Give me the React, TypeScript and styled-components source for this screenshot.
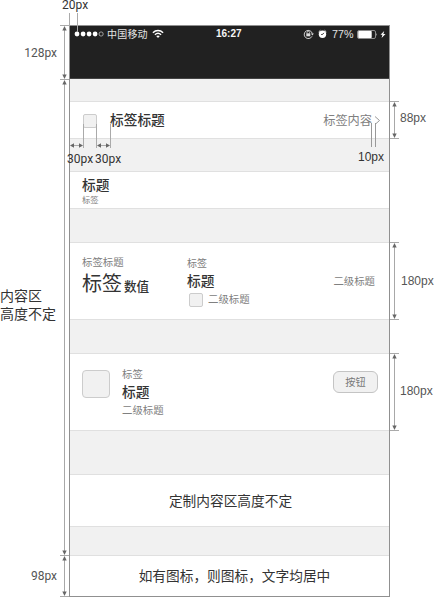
import React from 'react';
import styled, { createGlobalStyle } from 'styled-components';

const GlobalStyle = createGlobalStyle`
  * { box-sizing: border-box; }
  body { margin: 0; background: #fff; font-family: "Noto Sans CJK SC", sans-serif; color: #333; }
`;

const Page = styled.main`
  display: grid;
  grid-template-columns: 69px 321px 44px;
  width: 434px;
  height: 597px;
  padding-top: 25px;
  position: relative;
  overflow: hidden;
  background: #fff;
`;

const Phone = styled.section`
  display: flex;
  flex-direction: column;
  height: 572px;
  border: 1px solid #909090;
  background: #f1f1f1;
`;

const Header = styled.header`
  height: 53px;
  background: #212121;
  border-bottom: 1px solid #444;
`;

const StatusBar = styled.div`
  display: flex;
  align-items: center;
  height: 16px;
  padding-left: 4px;
  color: #e4e4e4;
`;

const Carrier = styled.span`
  width: 45px;
  margin-left: 3px;
  font-size: 10px;
  line-height: 14px;
  letter-spacing: 0.2px;
  white-space: nowrap;
`;

const Clock = styled.span`
  width: 27px;
  margin-left: 52px;
  font: bold 10px/14px "Liberation Sans", sans-serif;
  color: #f5f5f5;
`;

const Percent = styled.span`
  width: 25px;
  margin-left: 4px;
  font: 10.7px/14px "Liberation Sans", sans-serif;
`;

const Icon = styled.svg<{ $gap?: number }>`
  display: block;
  flex: none;
  margin-left: ${(p) => p.$gap ?? 0}px;
`;

const Row = styled.div<{ $top: number; $height: number; $center?: boolean }>`
  display: flex;
  flex: none;
  align-items: ${(p) => (p.$center ? 'center' : 'flex-start')};
  justify-content: ${(p) => (p.$center ? 'center' : 'flex-start')};
  height: ${(p) => p.$height}px;
  margin-top: ${(p) => p.$top}px;
  background: #fff;
  border-top: 1px solid #e0e0e0;
  border-bottom: 1px solid #e0e0e0;
`;

const CenterRow = styled(Row)`
  padding: 0 0 2px 2px;
`;

const FooterRow = styled(Row)`
  padding: 0 0 2px 10px;
  border-bottom: 0;
`;

const Column = styled.div<{ $left?: number; $top?: number; $width?: number }>`
  display: flex;
  flex: none;
  flex-direction: column;
  width: ${(p) => (p.$width ? `${p.$width}px` : 'auto')};
  margin-left: ${(p) => p.$left ?? 0}px;
  padding-top: ${(p) => p.$top ?? 0}px;
`;

const Title = styled.span<{ $size?: number; $line?: number }>`
  font-size: ${(p) => p.$size ?? 13.7}px;
  line-height: ${(p) => p.$line ?? 18}px;
  font-weight: 500;
  color: #333;
  white-space: nowrap;
`;

const BodyText = styled(Title)`
  font-weight: 400;
`;

const Caption = styled.span<{ $size?: number; $line?: number }>`
  font-size: ${(p) => p.$size ?? 10.4}px;
  line-height: ${(p) => p.$line ?? 14}px;
  color: #808080;
  white-space: nowrap;
`;

const Value = styled.div`
  display: flex;
  align-items: baseline;
  gap: 2px;
`;

const Inline = styled.div`
  display: flex;
  align-items: center;
  gap: 5px;
`;

const Thumb = styled.span<{ $size: number; $radius: number }>`
  flex: none;
  width: ${(p) => p.$size}px;
  height: ${(p) => p.$size}px;
  border: 1px solid #ccc;
  border-radius: ${(p) => p.$radius}px;
  background: #f1f1f1;
`;

const ThumbSlot = styled.div<{ $left: number; $top: number }>`
  display: flex;
  margin: ${(p) => p.$top}px 0 0 ${(p) => p.$left}px;
`;

const Trailing = styled.div<{ $top: number; $right: number }>`
  display: flex;
  align-items: center;
  margin: ${(p) => p.$top}px ${(p) => p.$right}px 0 auto;
`;

const Button = styled.button`
  width: 45px;
  height: 22px;
  padding: 0 0 1px;
  border: 1px solid #c4c4c4;
  border-radius: 6px;
  background: #f1f1f1;
  color: #777;
  font: 10.2px/18px "Noto Sans CJK SC", sans-serif;
`;

const Gutter = styled.aside`
  display: flex;
  flex-direction: column;
`;

const Measure = styled.div<{ $top?: number; $height: number; $side: 'left' | 'right' }>`
  display: flex;
  flex: none;
  align-items: center;
  justify-content: ${(p) => (p.$side === 'left' ? 'flex-end' : 'flex-start')};
  height: ${(p) => p.$height}px;
  margin-top: ${(p) => p.$top ?? 0}px;
`;

const Dim = styled.span<{ $font?: string; $pad?: string; $line?: number }>`
  padding: ${(p) => p.$pad ?? '0'};
  font: 12px/${(p) => p.$line ?? 16}px ${(p) => p.$font ?? '"Liberation Sans"'}, sans-serif;
  color: #555;
  white-space: nowrap;
`;

const AreaNote = styled.div`
  width: 60px;
  padding-bottom: 27px;
  font-size: 14px;
  line-height: 18px;
  white-space: nowrap;
`;

const Overlay = styled.div<{ $x: number; $y: number }>`
  position: absolute;
  left: ${(p) => p.$x}px;
  top: ${(p) => p.$y}px;
`;

const DimDark = styled(Dim)`
  display: block;
  color: #333;
`;

function VerticalRuler({ height }: { height: number }) {
  return (
    <Icon width="9" height={height} fill="none">
      <path d={`M0 .5H9M0 ${height - 0.5}H9`} stroke="#aaa" />
      <path d={`M4.5 2V${height - 2}`} stroke="#a8a8a8" />
      <path
        d={`M4.5 1L6.7 5.5H2.3ZM4.5 ${height - 1}L6.7 ${height - 5.5}H2.3Z`}
        fill="#666"
      />
    </Icon>
  );
}

function StatusIcons() {
  return (
    <>
      <Icon $gap={60} width="12" height="12" viewBox="0 0 12 12" fill="none" stroke="#ddd">
        <path d="M9 8.3A4.1 4.1 0 1 1 9.3 5.5" strokeWidth=".9" />
        <path d="M7.9 5.5h3L9.4 7.5Z" fill="#ddd" stroke="none" />
        <path d="M4 5.4V4.5a1.3 1.3 0 0 1 2.6 0v.9" strokeWidth=".8" />
        <path d="M3.3 5.3h4v3h-4Z" fill="#ddd" stroke="none" />
      </Icon>
      <Icon $gap={2} width="11" height="12" viewBox="0 0 11 12">
        <circle cx="5.5" cy="6.3" r="3.7" fill="#fff" />
        <path d="M1.6 4 3.4 2.3M9.4 4 7.6 2.3" stroke="#eee" strokeWidth="1" />
        <path d="M5.5 6.5 6.8 4.9M5.5 6.5H4.2" stroke="#333" strokeWidth="1" />
      </Icon>
    </>
  );
}

export default function App() {
  return (
    <>
      <GlobalStyle />
      <Page>
        <Gutter>
          <Measure $height={55} $side="left">
            <Dim $font="Roboto" $pad="0 3px 0 0">128px</Dim>
            <VerticalRuler height={55} />
          </Measure>
          <Measure $height={477} $top={-1} $side="left">
            <AreaNote>
              内容区
              <br />
              高度不定
            </AreaNote>
            <VerticalRuler height={477} />
          </Measure>
          <Measure $height={42} $top={-1} $side="left">
            <Dim $font="Roboto" $pad="0 3px 0 0">98px</Dim>
            <VerticalRuler height={42} />
          </Measure>
        </Gutter>

        <Phone>
          <Header>
            <StatusBar>
              <Icon width="30" height="8" viewBox="0 0 30 8" fill="#fff">
                <circle cx="3" cy="4" r="2.4" />
                <circle cx="9.1" cy="4" r="2.4" />
                <circle cx="15.1" cy="4" r="2.4" />
                <circle cx="21.1" cy="4" r="2.4" />
                <circle cx="27.1" cy="4" r="2.1" fill="none" stroke="#bbb" strokeWidth=".8" />
              </Icon>
              <Carrier>中国移动</Carrier>
              <Icon width="12" height="10" viewBox="0 0 12 10" fill="none" stroke="#fff" strokeWidth="1.4">
                <path d="M.9 3.7C3.8.8 8.2.8 11.1 3.7M2.9 5.8c1.8-1.7 4.4-1.7 6.2 0" />
                <path d="M4.2 7.1q1.8-1.4 3.6 0L6 9Z" fill="#fff" stroke="none" />
              </Icon>
              <Clock>16:27</Clock>
              <StatusIcons />
              <Percent>77%</Percent>
              <Icon width="21" height="9" viewBox="0 0 21 9">
                <rect x=".5" y=".5" width="18" height="8" rx="1.5" fill="none" stroke="#aaa" strokeWidth=".8" />
                <rect x="1.2" y="1.1" width="13.5" height="6.8" rx=".6" fill="#fff" />
                <path d="M19.4 3q1.3 1.5 0 3Z" fill="#ccc" />
              </Icon>
              <Icon $gap={2} width="6" height="9" viewBox="0 0 6 9">
                <path d="M4.2 1 .5 4.8h1.9L1.6 8l3.9-4H3.4Z" fill="#fff" />
              </Icon>
            </StatusBar>
          </Header>

          <Row $top={22} $height={38}>
            <ThumbSlot $left={13} $top={12}>
              <Thumb $size={14} $radius={2} />
            </ThumbSlot>
            <Column $left={13} $top={8}>
              <Title>标签标题</Title>
            </Column>
            <Trailing $top={10} $right={8}>
              <Caption $size={12.2} $line={16}>标签内容</Caption>
              <Icon $gap={2} width="7" height="9" viewBox="0 0 7 9" fill="none" stroke="#999">
                <path d="M1 .5 5.5 4.5 1 8.5" />
              </Icon>
            </Trailing>
          </Row>

          <Row $top={32} $height={38}>
            <Column $left={12} $top={3}>
              <Title>标题</Title>
              <Caption $size={8.3} $line={12}>标签</Caption>
            </Column>
          </Row>

          <Row $top={33} $height={78}>
            <Column $left={12} $top={12} $width={105}>
              <Caption>标签标题</Caption>
              <Value>
                <BodyText $size={20} $line={28}>标签</BodyText>
                <Title $size={12.6}>数值</Title>
              </Value>
            </Column>
            <Column $top={13}>
              <Caption $size={10}>标签</Caption>
              <Title $line={20}>标题</Title>
              <ThumbLine />
            </Column>
            <Trailing $top={31} $right={14}>
              <Caption>二级标题</Caption>
            </Trailing>
          </Row>

          <Row $top={33} $height={78}>
            <ThumbSlot $left={12} $top={16}>
              <Thumb $size={28} $radius={4} />
            </ThumbSlot>
            <Column $left={12} $top={13}>
              <Caption>标签</Caption>
              <Title $line={21}>标题</Title>
              <Caption $line={16}>二级标题</Caption>
            </Column>
            <Trailing $top={17} $right={11}>
              <Button>按钮</Button>
            </Trailing>
          </Row>

          <CenterRow $top={43} $height={53} $center>
            <BodyText>定制内容区高度不定</BodyText>
          </CenterRow>

          <FooterRow $top={28} $height={41} $center>
            <BodyText>如有图标，则图标，文字均居中</BodyText>
          </FooterRow>
        </Phone>

        <Gutter>
          <Measure $top={76} $height={38} $side="right">
            <VerticalRuler height={38} />
            <Dim $pad="0 0 4px 1px">88px</Dim>
          </Measure>
          <Measure $top={103} $height={78} $side="right">
            <VerticalRuler height={78} />
            <Dim $pad="0 0 0 2px">180px</Dim>
          </Measure>
          <Measure $top={33} $height={78} $side="right">
            <VerticalRuler height={78} />
            <Dim $pad="0 0 2px 1px">180px</Dim>
          </Measure>
        </Gutter>

        <Overlay $x={62} $y={0}>
          <DimDark $font="Roboto" $line={10}>20px</DimDark>
        </Overlay>
        <Overlay $x={69} $y={13}>
          <Icon width="10" height="20" stroke="#aaa">
            <path d="M.5 0V13M8.5 0V19" />
          </Icon>
        </Overlay>
        <Overlay $x={69} $y={124}>
          <Icon width="43" height="25" fill="none">
            <path d="M14.5 0V24M27.5 0V24M41.5 0V24M2 21.5H13M29 21.5H40" stroke="#aaa" />
            <path
              d="M1 21.5 5 19.3v4.4ZM14 21.5 10 19.3v4.4ZM28 21.5l4-2.2v4.4ZM41 21.5l-4-2.2v4.4Z"
              fill="#666"
            />
          </Icon>
        </Overlay>
        <Overlay $x={67} $y={151}>
          <DimDark $font="Roboto">30px</DimDark>
        </Overlay>
        <Overlay $x={95} $y={151}>
          <DimDark $font="Roboto">30px</DimDark>
        </Overlay>
        <Overlay $x={371} $y={123}>
          <Icon width="6" height="24" stroke="#999">
            <path d="M.5 0V24M4.5 0V24" />
          </Icon>
        </Overlay>
        <Overlay $x={358} $y={149}>
          <DimDark>10px</DimDark>
        </Overlay>
      </Page>
    </>
  );
}

function ThumbLine() {
  return (
    <Inline>
      <ThumbSlot $left={2} $top={2}>
        <Thumb $size={14} $radius={2} />
      </ThumbSlot>
      <Caption $line={18}>二级标题</Caption>
    </Inline>
  );
}
